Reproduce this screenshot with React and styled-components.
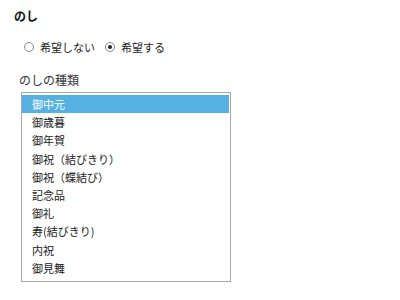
import { useState } from "react";
import styled, { createGlobalStyle } from "styled-components";

const GlobalStyle = createGlobalStyle`
  body {
    margin: 0;
    background: #fff;
    font-family: "Noto Sans CJK JP", "Noto Sans", sans-serif;
    color: #222;
  }
`;

const NOSHI_TYPES = [
  "御中元",
  "御歳暮",
  "御年賀",
  "御祝（結びきり）",
  "御祝（蝶結び）",
  "記念品",
  "御礼",
  "寿(結びきり)",
  "内祝",
  "御見舞",
];

function App() {
  const [wanted, setWanted] = useState("yes");
  const [selected, setSelected] = useState(0);

  return (
    <Page>
      <GlobalStyle />
      <Title>のし</Title>
      <RadioRow>
        <RadioLabel onClick={() => setWanted("no")}>
          <RadioMark checked={wanted === "no"} />
          希望しない
        </RadioLabel>
        <RadioLabel onClick={() => setWanted("yes")}>
          <RadioMark checked={wanted === "yes"} />
          希望する
        </RadioLabel>
      </RadioRow>
      <FieldLabel>のしの種類</FieldLabel>
      <ListBox>
        {NOSHI_TYPES.map((name, i) => (
          <Option key={name} active={i === selected} onClick={() => setSelected(i)}>
            {name}
          </Option>
        ))}
      </ListBox>
    </Page>
  );
}

const Page = styled.div`
  padding: 8px 14px;
  width: 400px;
  height: 300px;
  box-sizing: border-box;
`;

const Title = styled.div`
  font-size: 12px;
  font-weight: bold;
  line-height: 16px;
  color: #111;
`;

const RadioRow = styled.div`
  display: flex;
  align-items: center;
  gap: 10px;
  margin-top: 15px;
  padding-left: 10px;
  height: 16px;
`;

const RadioLabel = styled.label`
  display: flex;
  align-items: center;
  gap: 6px;
  font-size: 11px;
  line-height: 16px;
  cursor: pointer;
`;

const RadioMark = styled.span`
  position: relative;
  width: 8px;
  height: 8px;
  border: 1px solid #888;
  border-radius: 50%;
  background: #fff;

  &::after {
    content: "";
    display: ${(p) => (p.checked ? "block" : "none")};
    position: absolute;
    left: 2px;
    top: 2px;
    width: 4px;
    height: 4px;
    border-radius: 50%;
    background: #222;
  }
`;

const FieldLabel = styled.div`
  font-size: 12px;
  line-height: 16px;
  margin: 17px 0 0 5px;
  color: #333;
`;

const ListBox = styled.ul`
  list-style: none;
  margin: 4px 0 0 7px;
  padding: 2px 1px 0 0;
  width: 210px;
  height: 190px;
  box-sizing: border-box;
  border: 1px solid #a9a9a9;
  overflow: hidden;
`;

const Option = styled.li`
  height: 18.2px;
  line-height: 18.2px;
  padding-left: 10px;
  font-size: 11px;
  white-space: nowrap;
  cursor: default;
  color: ${(p) => (p.active ? "#fff" : "#222")};
  background: ${(p) => (p.active ? "#56b1e2" : "transparent")};
`;

export default App;
